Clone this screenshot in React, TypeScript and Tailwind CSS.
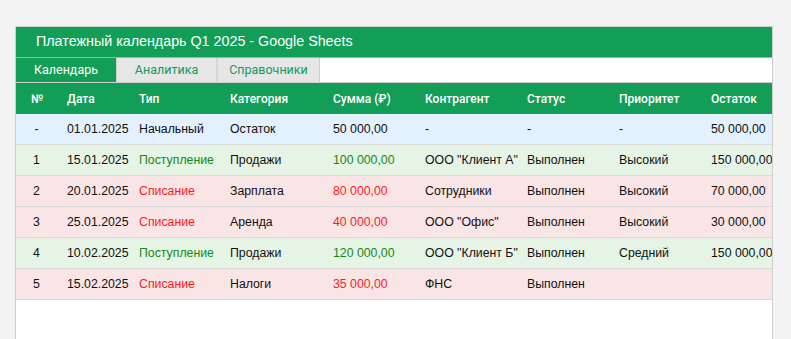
import React from 'react'

type Row = {
  n: string
  date: string
  type: string
  category: string
  sum: string
  party: string
  status: string
  priority: string
  balance: string
  kind: 'start' | 'in' | 'out'
}

const rows: Row[] = [
  { n: '-', date: '01.01.2025', type: 'Начальный', category: 'Остаток', sum: '50 000,00', party: '-', status: '-', priority: '-', balance: '50 000,00', kind: 'start' },
  { n: '1', date: '15.01.2025', type: 'Поступление', category: 'Продажи', sum: '100 000,00', party: 'ООО "Клиент А"', status: 'Выполнен', priority: 'Высокий', balance: '150 000,00', kind: 'in' },
  { n: '2', date: '20.01.2025', type: 'Списание', category: 'Зарплата', sum: '80 000,00', party: 'Сотрудники', status: 'Выполнен', priority: 'Высокий', balance: '70 000,00', kind: 'out' },
  { n: '3', date: '25.01.2025', type: 'Списание', category: 'Аренда', sum: '40 000,00', party: 'ООО "Офис"', status: 'Выполнен', priority: 'Высокий', balance: '30 000,00', kind: 'out' },
  { n: '4', date: '10.02.2025', type: 'Поступление', category: 'Продажи', sum: '120 000,00', party: 'ООО "Клиент Б"', status: 'Выполнен', priority: 'Средний', balance: '150 000,00', kind: 'in' },
  { n: '5', date: '15.02.2025', type: 'Списание', category: 'Налоги', sum: '35 000,00', party: 'ФНС', status: 'Выполнен', priority: '', balance: '', kind: 'out' },
]

const headers = ['Дата', 'Тип', 'Категория', 'Сумма (₽)', 'Контрагент', 'Статус', 'Приоритет', 'Остаток']
const widths = ['w-[72px]', 'w-[91px]', 'w-[103px]', 'w-[92px]', 'w-[102px]', 'w-[92px]', 'w-[92px]', 'w-[100px]']

const rowBg = { start: 'bg-[#e3f0fd]', in: 'bg-[#e6f4e6]', out: 'bg-[#f9e5e5]' }
const accent = { start: 'text-[#111]', in: 'text-[#138a13]', out: 'text-[#ff1a1a]' }

function App() {
  return (
    <div className="w-full min-h-screen bg-[#f3f3f3] pt-[26px] pl-[15px]" style={{ fontFamily: '"Liberation Sans", Arial, sans-serif' }}>
      <div className="w-[758px] h-[320px] bg-white border border-[#cfcfcf] overflow-hidden">
        <div className="h-[31px] bg-[#129e57] flex items-center pl-[20px] text-white text-[14.3px] border-b border-[#7cc9a2]">
          Платежный календарь Q1 2025 - Google Sheets
        </div>

        <div className="flex h-[25px] border-b border-[#cfcfcf] text-[12.5px]" style={{ fontFamily: 'Roboto, "Liberation Sans", sans-serif' }}>
          <div className="w-[101px] flex items-center justify-center bg-[#129e57] text-white border-r border-[#cfcfcf]">Календарь</div>
          <div className="w-[101px] flex items-center justify-center bg-[#e6e6e6] text-[#139a5e] border-r-2 border-[#d6d6d6]">Аналитика</div>
          <div className="w-[102px] flex items-center justify-center bg-[#e6e6e6] text-[#139a5e] border-r border-[#cfcfcf]">Справочники</div>
          <div className="flex-1 bg-white"></div>
        </div>

        <div className="flex h-[31px] bg-[#129e57] text-white text-[12px] font-medium whitespace-nowrap" style={{ fontFamily: 'Roboto, "Liberation Sans", sans-serif' }}>
          <div className="w-[41px] shrink-0 flex items-center justify-center pl-[1px]">№</div>
          {headers.map((h, i) => (
            <div key={h} className={`${widths[i]} shrink-0 flex items-center pl-[10px]`}>{h}</div>
          ))}
        </div>

        {rows.map((r, idx) => (
          <div key={idx} className={`flex h-[31px] border-b border-[#d8d8d8] text-[12.3px] text-[#111] whitespace-nowrap ${rowBg[r.kind]}`}>
            <div className="w-[41px] shrink-0 flex items-center justify-center">{r.n}</div>
            <div className="w-[72px] shrink-0 flex items-center pl-[10px]">{r.date}</div>
            <div className={`w-[91px] shrink-0 flex items-center pl-[10px] ${accent[r.kind]}`}>{r.type}</div>
            <div className="w-[103px] shrink-0 flex items-center pl-[10px]">{r.category}</div>
            <div className={`w-[92px] shrink-0 flex items-center pl-[10px] ${accent[r.kind]}`}>{r.sum}</div>
            <div className="w-[102px] shrink-0 flex items-center pl-[10px]">{r.party}</div>
            <div className="w-[92px] shrink-0 flex items-center pl-[10px]">{r.status}</div>
            <div className="w-[92px] shrink-0 flex items-center pl-[10px]">{r.priority}</div>
            <div className="w-[100px] shrink-0 flex items-center pl-[10px]">{r.balance}</div>
          </div>
        ))}
      </div>
    </div>
  )
}

export default App
